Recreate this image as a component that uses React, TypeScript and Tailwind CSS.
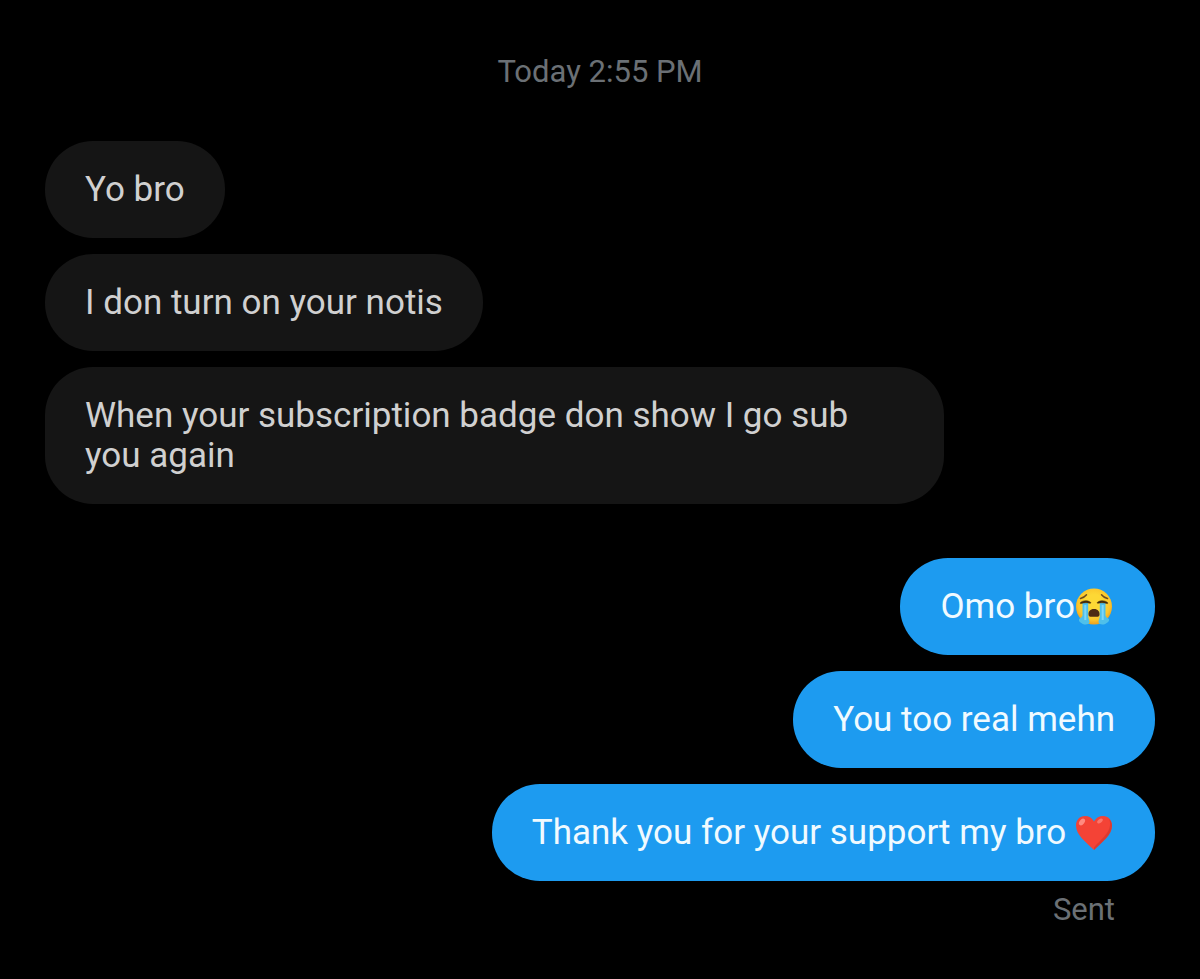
import type { ReactNode } from 'react'
import clsx from 'clsx'

interface Message {
  id: number
  text: string
  emoji?: ReactNode
}

const CryingEmoji = () => (
  <svg viewBox="0 0 38 38" className="mr-0.5 inline-block size-[38px] align-[-8px]" role="img" aria-label="Loudly crying face">
    <defs>
      <radialGradient id="face" cx="0.5" cy="0.42" r="0.56">
        <stop offset="0.45" stopColor="#fdd835" />
        <stop offset="0.8" stopColor="#fbc52c" />
        <stop offset="1" stopColor="#f0a51e" />
      </radialGradient>
    </defs>
    <circle cx="19" cy="18.5" r="18" fill="url(#face)" />
    {/* brows */}
    <path d="M5.500 10.500c2.300-.5 4.500-1.800 6-3.700M32.500 10.500c-2.300-.5-4.500-1.800-6-3.700" fill="none" stroke="#6d4c20" strokeWidth="1.500" strokeLinecap="round" />
    {/* mouth */}
    <path d="M19 21c-4 0-5.600 2.600-5.600 5.300 0 1.700.8 2.400 2 2.400h7.200c1.200 0 2-.7 2-2.400 0-2.700-1.600-5.300-5.600-5.300z" fill="#4e2a14" />
    {/* tears */}
    <path d="M7.500 15h5.700v13.500c.2 2.300 1.600 4.300 1.200 6-.6 2.200-4.200 2.400-6.600 1.400-3-1.300-4.300-3-3.800-4.600.5-1.400 3.200-1.600 3.500-3.800z" fill="#4fc0ea" />
    <path d="M30.500 15h-5.700v13.500c-.2 2.300-1.600 4.300-1.200 6 .6 2.200 4.200 2.400 6.600 1.400 3-1.300 4.300-3 3.800-4.600-.5-1.400-3.200-1.600-3.500-3.800z" fill="#4fc0ea" />
    <path d="M10.300 17v15M27.700 17v15" stroke="#7fd6f7" strokeWidth="2" />
    {/* closed eyes */}
    <path d="M5.500 14.500c2.500-2 6.500-2.700 10-.3.600.5.300 1.200-.5 1.100-3-.9-6-.7-9 .3-.8.200-1.100-.6-.5-1.100zM32.500 14.500c-2.500-2-6.500-2.700-10-.3-.6.500-.3 1.200.5 1.100 3-.9 6-.7 9 .3.800.2 1.100-.6.500-1.100z" fill="#422b0d" stroke="#422b0d" strokeWidth="0.500" />
  </svg>
)

const HeartEmoji = () => (
  <svg viewBox="0 0 38 38" className="mr-0.5 inline-block size-[38px] align-[-8px]" role="img" aria-label="Red heart">
    <path d="M19 7.500C17 3.800 13.600 2 10 2 4.600 2 1 6.200 1 11.500c0 9.500 9.500 16 18 24.500 8.500-8.500 18-15 18-24.500C37 6.200 33.400 2 28 2c-3.600 0-7 1.800-9 5.500z" fill="#f44336" />
    <path d="M34 5c1 2 1.300 4 1 6.500C34 20 25.500 25.500 19 33.500V36c8.500-8.500 18-15 18-24.500C37 9 35.800 6.500 34 5z" fill="#c9352d" opacity="0.6" />
    <ellipse cx="7" cy="8" rx="2.400" ry="3.800" transform="rotate(38 7 8)" fill="#ff8a80" />
    <ellipse cx="25" cy="7" rx="1.800" ry="3.200" transform="rotate(52 25 7)" fill="#ff8a80" opacity="0.7" />
  </svg>
)

const received: Message[] = [
  { id: 1, text: 'Yo bro' },
  { id: 2, text: 'I don turn on your notis' },
  { id: 3, text: 'When your subscription badge don show I go sub you again' }
]

const sent: Message[] = [
  { id: 4, text: 'Omo bro', emoji: <CryingEmoji /> },
  { id: 5, text: 'You too real mehn' },
  { id: 6, text: 'Thank you for your support my bro ', emoji: <HeartEmoji /> }
]

interface MessageGroupProps {
  messages: Message[]
  own?: boolean
}

const MessageGroup = ({ messages, own = false }: MessageGroupProps) => (
  <ul className={clsx('flex flex-col gap-4', own ? 'items-end' : 'items-start')}>
    {messages.map((message) => (
      <li
        key={message.id}
        className={clsx(
          'max-w-[81%] rounded-[48px] px-10 pt-[29px] pb-7 text-[35px] leading-10',
          own ? 'bg-[#1d9bf0] text-[#f0faff]' : 'bg-[#151515] text-[#d0d0d0]'
        )}
      >
        {message.text}
        {message.emoji}
      </li>
    ))}
  </ul>
)

export default function App() {
  return (
    <main className="min-h-screen bg-black px-[45px] pt-[52px] pb-12 font-[Roboto,sans-serif]">
      <p className="mb-[49px] text-center text-[31px] leading-10 text-[#6b7075]">Today 2:55 PM</p>
      <MessageGroup messages={received} />
      <div className="mt-[54px]">
        <MessageGroup messages={sent} own />
      </div>
      <p className="mt-[11px] pr-10 text-right text-[31px] leading-9 text-[#6b7075]">Sent</p>
    </main>
  )
}
